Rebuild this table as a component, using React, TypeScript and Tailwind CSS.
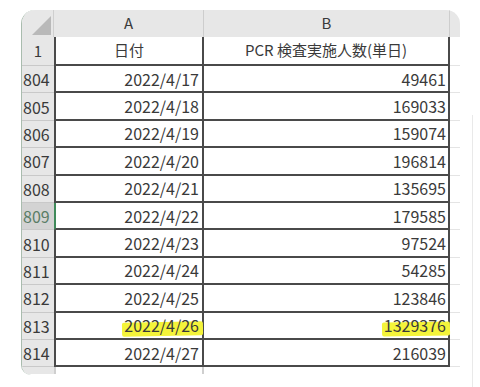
const rows: [number, string, string][] = [
  [804, '2022/4/17', '49461'],
  [805, '2022/4/18', '169033'],
  [806, '2022/4/19', '159074'],
  [807, '2022/4/20', '196814'],
  [808, '2022/4/21', '135695'],
  [809, '2022/4/22', '179585'],
  [810, '2022/4/23', '97524'],
  [811, '2022/4/24', '54285'],
  [812, '2022/4/25', '123846'],
  [813, '2022/4/26', '1329376'],
  [814, '2022/4/27', '216039'],
]

const font = {fontFamily: '"Noto Sans CJK JP", "Noto Sans", sans-serif'}

function Marker({on, children}: {on: boolean; children: React.ReactNode}) {
  if (!on) return <>{children}</>
  return (
    <span className="relative inline-block">
      <span className="absolute -left-[2px] -right-[4px] top-[9px] bottom-[1px] -rotate-1 rounded-[2px] bg-[#f4f43a]" />
      <span className="relative">{children}</span>
    </span>
  )
}

export default function App() {
  return (
    <div className="flex h-[387px] w-[480px] overflow-hidden bg-white text-[#3a3a3a]" style={font}>
      <div className="ml-[21px] mt-[10px] flex h-[365px] w-[439px] flex-col overflow-hidden rounded-tl-[14px] rounded-tr-[14px] rounded-bl-[10px] border-l border-[#a9bcae]">
        {/* column header */}
        <div className="flex h-[27px] shrink-0 bg-[#e7e7e7] text-[15px]">
          <div className="flex w-[32px] shrink-0 items-end justify-end border-r border-[#cfcfcf] pb-[2px] pr-[2px]">
            <div className="h-0 w-0 border-b-[19px] border-l-[19px] border-b-[#b9b9b9] border-l-transparent" />
          </div>
          <div className="flex w-[150px] shrink-0 items-center justify-center border-r border-[#cdcdcd]">A</div>
          <div className="flex w-[246px] shrink-0 items-center justify-center border-r border-[#cdcdcd]">B</div>
          <div className="flex-1" />
        </div>

        {/* row 1 */}
        <div className="flex h-[29px] shrink-0 text-[15px]">
          <div className="flex w-[32px] shrink-0 items-center justify-center border-b border-[#c9c9c9] bg-[#e7e7e7]">1</div>
          <div className="flex w-[150px] shrink-0 items-center justify-center border-b-2 border-l-2 border-r-2 border-[#4a4a4a]">日付</div>
          <div className="flex w-[246px] shrink-0 items-center justify-center border-b-2 border-r-2 border-[#4a4a4a]">
            PCR 検査実施人数(単日)
          </div>
          <div className="flex-1 border-b border-[#e4e4e4]" />
        </div>

        {rows.map(([n, date, count]) => {
          const active = n === 809
          const hl = n === 813
          return (
            <div key={n} className="flex h-[27.4px] shrink-0 text-[16px]">
              <div
                className={
                  active
                    ? 'flex w-[32px] shrink-0 items-center border-b border-[#c9c9c9] bg-[#d3d3d3] pl-[1px] text-[#5a7d66]'
                    : 'flex w-[32px] shrink-0 items-center border-b border-[#c9c9c9] bg-[#e7e7e7] pl-[1px]'
                }
              >
                {n}
              </div>
              <div
                className={
                  active
                    ? 'flex w-[150px] shrink-0 items-center justify-end border-b-2 border-l-2 border-r-2 border-b-[#4a4a4a] border-l-[#3f8a5a] border-r-[#4a4a4a] pr-[3px]'
                    : 'flex w-[150px] shrink-0 items-center justify-end border-b-2 border-l-2 border-r-2 border-[#4a4a4a] pr-[3px]'
                }
              >
                <Marker on={hl}>{date}</Marker>
              </div>
              <div className="flex w-[246px] shrink-0 items-center justify-end border-b-2 border-r-2 border-[#4a4a4a] pr-[2px]">
                <Marker on={hl}>{count}</Marker>
              </div>
              <div className="flex-1 border-b border-[#e4e4e4]" />
            </div>
          )
        })}

        {/* partial row 815, cut off by the screenshot edge */}
        <div className="flex h-[20px] shrink-0 text-[16px]">
          <div className="h-[7px] w-[32px] shrink-0 overflow-hidden bg-[#e7e7e7] pl-[1px] pt-[3px] leading-[20px] text-[#8a8a8a]">
            815
          </div>
          <div className="h-[7px] w-[150px] shrink-0 border-l-2 border-r-2 border-[#cfcfcf]" />
          <div className="flex-1" />
        </div>
      </div>
      <div className="ml-[12px] mt-[115px] h-[272px] w-px bg-[#e9e9e9]" />
    </div>
  )
}
